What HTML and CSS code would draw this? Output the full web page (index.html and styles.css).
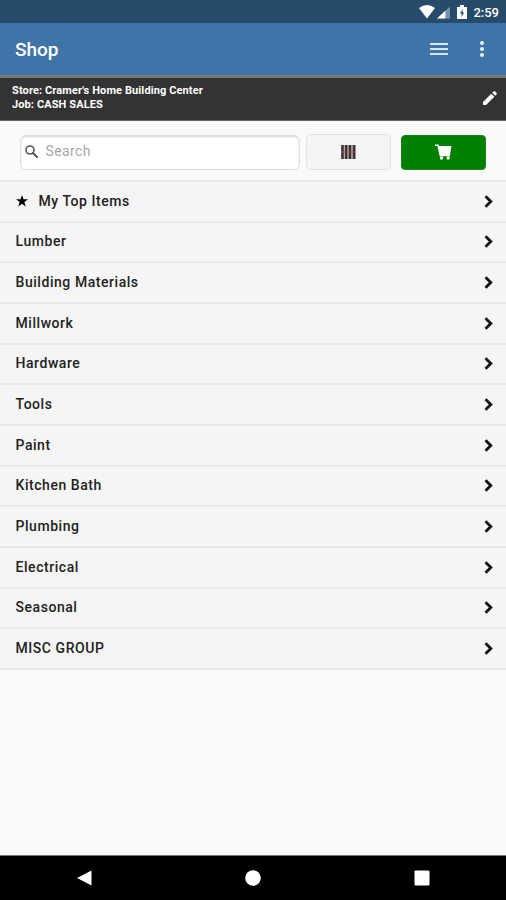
FILE: index.html
```html
<!DOCTYPE html>
<html lang="en">
<head>
    <meta charset="UTF-8">
    <meta name="viewport" content="width=device-width, initial-scale=1.0">
    <title>Shop</title>
    <link rel="stylesheet" href="styles.css">
</head>
<body>
    <div class="status-bar">
        <svg class="wifi" width="16" height="14" viewBox="0 0 16 14"><path d="M0 3Q8-3 16 3L8 13.500Z" fill="#fff"/></svg>
        <svg class="signal" width="13" height="13" viewBox="0 0 14 13"><path d="M14 0V13H0Z" fill="#7891a8"/><path d="M9 4.600V13H0Z" fill="#fff"/></svg>
        <svg class="battery" width="10" height="14" viewBox="0 0 10 14"><path d="M3 0h4v2h3v12H0V2h3z" fill="#fff"/><path d="M5.600 4 3 8.500H4.600v3.500L7.200 7.500H5.600z" fill="#264b6b"/></svg>
        <span class="clock">2:59</span>
    </div>
    <header class="header">
        <h1>Shop</h1>
        <svg class="menu" width="18" height="14" viewBox="0 0 18 14"><path d="M0 2h18M0 7h18M0 12h18" stroke="#d8e4ee" stroke-width="2"/></svg>
        <svg class="more" width="4" height="16" viewBox="0 0 4 16" fill="#e4edf4"><circle cx="2" cy="2" r="2"/><circle cx="2" cy="8" r="2"/><circle cx="2" cy="14" r="2"/></svg>
    </header>
    <div class="store-info">
        <div class="store-text">
            <p class="store">Store: Cramer's Home Building Center</p>
            <p class="job">Job: CASH SALES</p>
        </div>
        <svg class="edit" width="14" height="14" viewBox="0 0 14 14" fill="#fff"><path d="M0 14V11L8.300 2.700l3 3L3 14zM9.200 1.800 10.400.6Q11.300-.3 12.200.6L13.400 1.800Q14.300 2.700 13.400 3.600L12.200 4.800z"/></svg>
    </div>
    <div class="search-row">
        <label class="search-box">
            <svg width="13" height="13" viewBox="0 0 13 13" fill="none" stroke="#555"><circle cx="5" cy="5" r="4" stroke-width="1.600"/><path d="M8 8l4 4" stroke-width="2" stroke-linecap="round"/></svg>
            <input type="text" placeholder="Search">
        </label>
        <button class="btn scan">
            <svg width="15" height="14" viewBox="0 0 15 14"><path d="M0 0h15v14H0z" fill="#b5b0b0"/><path d="M1.500 0v14M5.200 0v14M9 0v14M13 0v14" stroke="#383434" stroke-width="2.400"/><path d="M0 7h15" stroke="#a44b4b" stroke-width="1"/></svg>
        </button>
        <button class="btn cart">
            <svg width="17" height="16" viewBox="0 0 17 16"><path d="M0 1.200H3L5.300 11.500H15" fill="none" stroke="#fff" stroke-width="1.600"/><path d="M3 2H16.500L15 11H5z" fill="#fff"/><circle cx="6.500" cy="14" r="1.700" fill="#fff"/><circle cx="13.200" cy="14" r="1.700" fill="#fff"/></svg>
        </button>
    </div>
    <ul class="list">
        <li>
            <svg class="star" width="12" height="12" viewBox="0 0 12 12"><path d="M6 0 7.500 4.200H12L8.400 7 9.700 11.500 6 8.800 2.300 11.500 3.600 7 0 4.200H4.500z"/></svg>
            <span>My Top Items</span>
        </li>
        <li><span>Lumber</span></li>
        <li><span>Building Materials</span></li>
        <li><span>Millwork</span></li>
        <li><span>Hardware</span></li>
        <li><span>Tools</span></li>
        <li><span>Paint</span></li>
        <li><span>Kitchen Bath</span></li>
        <li><span>Plumbing</span></li>
        <li><span>Electrical</span></li>
        <li><span>Seasonal</span></li>
        <li><span>MISC GROUP</span></li>
    </ul>
    <nav class="nav-bar">
        <svg width="16" height="16" viewBox="0 0 16 16" fill="#fff"><path d="M1 8 15.500 0.500V15.500Z"/></svg>
        <svg width="16" height="16" viewBox="0 0 16 16" fill="#fff"><circle cx="8" cy="8" r="7.800"/></svg>
        <svg width="16" height="16" viewBox="0 0 16 16" fill="#fff"><rect x=".5" y=".5" width="15" height="15" rx="1"/></svg>
    </nav>
    <script>
        // arrow on the right of every row
        document.querySelectorAll('.list li').forEach(item => {
            item.insertAdjacentHTML('beforeend', '<svg class="arrow" width="9" height="13" viewBox="0 0 9 13"><path d="M1.500 1.200 6.800 6.500 1.500 11.800" fill="none" stroke="#111" stroke-width="2.800"/></svg>');
        });
    </script>
</body>
</html>
```
FILE: styles.css
```css
*{
    margin: 0;
    padding: 0;
    box-sizing: border-box;
    font-family: Roboto, "Liberation Sans", sans-serif;
}
body{
    height: 100vh;
    display: flex;
    flex-direction: column;
    background: #f9f9f9;
    overflow: hidden;
}
svg{
    display: block;
    flex-shrink: 0;
}
.status-bar{
    height: 23px;
    display: flex;
    align-items: center;
    justify-content: flex-end;
    padding: 1px 7px 0 0;
    background: #264b6b;
}
.signal{
    margin-left: 2px;
}
.battery{
    margin: 0 6px 0 7px;
}
.clock{
    color: #fff;
    font-size: 13px;
    font-weight: 500;
}
.header{
    height: 52px;
    display: flex;
    align-items: center;
    padding: 0 22px 0 15px;
    background: #3e74a8;
}
.header h1{
    flex: 1;
    color: #fff;
    font-size: 19px;
    font-weight: 500;
}
.menu{
    margin-right: 32px;
}
.store-info{
    height: 46px;
    display: flex;
    align-items: center;
    padding: 0 9px 3px 12px;
    background: #333;
    border-top: 3px solid #777;
    border-bottom: 1px solid #666;
}
.store-text{
    flex: 1;
    color: #fff;
    font-size: 11px;
    line-height: 14px;
    font-weight: 700;
    letter-spacing: 0.110px;
}
.search-row{
    height: 59px;
    display: flex;
    align-items: center;
    padding: 3px 20px 0 19.500px;
}
.search-box{
    width: 281px;
    height: 35px;
    display: flex;
    align-items: center;
    padding: 0 0 2px 4px;
    background: #fff;
    border: 1px solid #ddd;
    border-radius: 6px;
    box-shadow: inset 0 1px 2px rgba(0,0,0,0.15);
}
.search-box input{
    width: 230px;
    margin-left: 8px;
    border: none;
    outline: none;
    background: none;
    font-size: 14px;
    letter-spacing: 0.4px;
}
.search-box input::placeholder{
    color: #a6a6a6;
}
.btn{
    height: 36px;
    display: flex;
    align-items: center;
    justify-content: center;
    border: 1px solid #e2e2e2;
    border-radius: 5px;
    background: #f5f5f5;
}
.scan{
    width: 85px;
    margin-left: 6px;
}
.cart{
    width: 85px;
    height: 35px;
    margin-left: 10px;
    background: #008000;
    border-color: #1a861a;
    border-radius: 4px;
}
.list{
    list-style: none;
    border-bottom: 2px solid #ebebeb;
}
.list li{
    height: 40.670px;
    display: flex;
    align-items: center;
    padding: 0 13px 0 15.500px;
    background: #f5f5f5;
    border-top: 2px solid #e8e8e8;
}
.list span{
    flex: 1;
    color: #222;
    font-size: 14px;
    font-weight: 500;
    letter-spacing: 0.550px;
    padding-bottom: 1px;
}
.star{
    margin-right: 11px;
}
.nav-bar{
    height: 45px;
    margin-top: auto;
    display: flex;
    align-items: center;
    justify-content: space-around;
    background: #000;
    border-top: 1px solid #777;
}
```
